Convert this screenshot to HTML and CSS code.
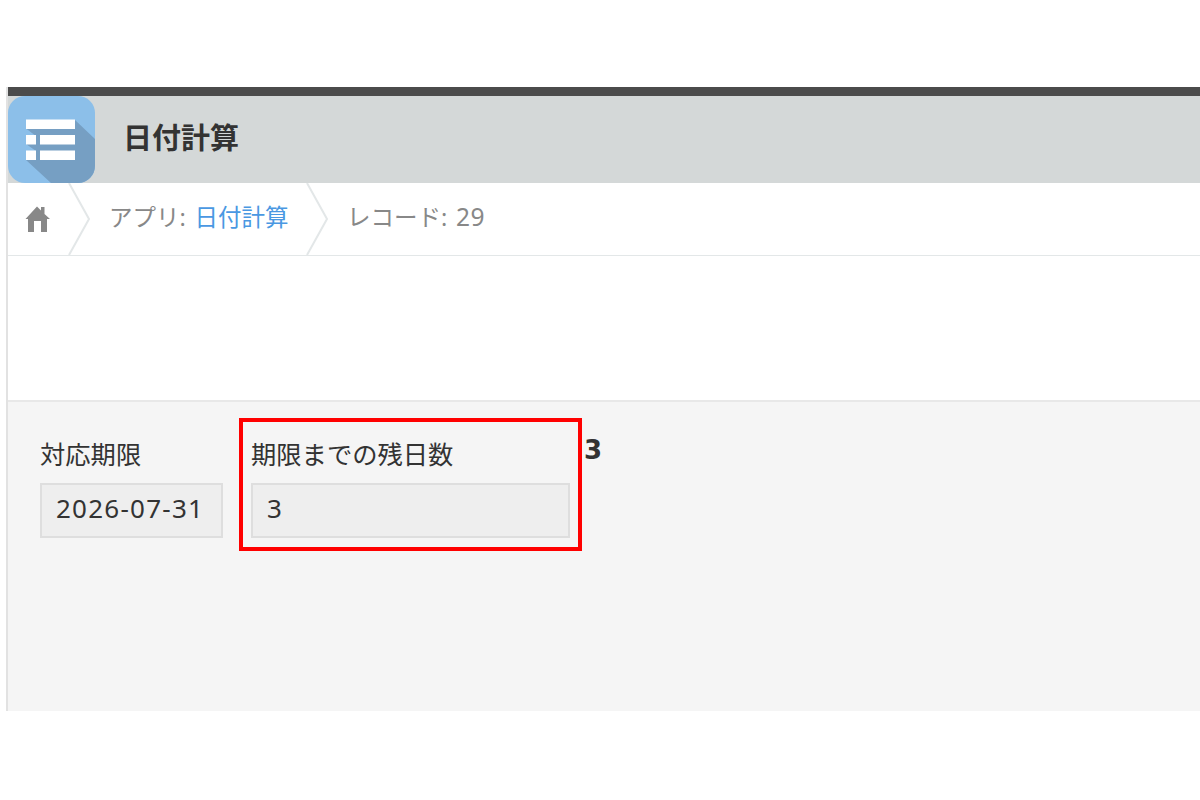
FILE: index.html
```html
<!DOCTYPE html>
<html lang="ja">
<head>
<meta charset="utf-8">
<title>日付計算</title>
<link rel="stylesheet" href="styles.css">
</head>
<body>
<div class="app">
  <div class="topbar"></div>
  <header class="header">
    <svg class="app-icon" width="87" height="87" viewBox="0 0 87 87">
      <defs><clipPath id="tile"><rect width="87" height="87" rx="17"/></clipPath></defs>
      <g clip-path="url(#tile)">
        <rect width="87" height="87" fill="#8cbfe9"/>
        <path d="M67 24L87 43V87H43L18 64H28V55L18 48H28V40L18 32.500Z" fill="#769fc3"/>
        <path d="M18 23.500H67V33H18ZM18 39H28V48.500H18ZM32 39H67V48.500H32ZM18 54.500H28V64H18ZM32 54.500H67V64H32Z" fill="#fff"/>
      </g>
    </svg>
    <h1 class="title">日付計算</h1>
  </header>
  <nav class="crumbs">
    <svg class="home" width="26" height="28" viewBox="0 0 26 28"><path d="M0.500 14L12 1.500L16 5.500V2H19.500V9L25 14H22V27H16V16H9V27H3V14Z" fill="#888"/></svg>
    <svg class="chevron" width="23" height="72" viewBox="0 0 23 72"><path d="M1 0L21 36L1 72" fill="none" stroke="#e3e7e8" stroke-width="2"/></svg>
    <span class="crumb crumb-app">アプリ: <a class="link">日付計算</a></span>
    <svg class="chevron" width="23" height="72" viewBox="0 0 23 72"><path d="M1 0L21 36L1 72" fill="none" stroke="#e3e7e8" stroke-width="2"/></svg>
    <span class="crumb crumb-record">レコード: <span class="number">29</span></span>
  </nav>
  <div class="toolbar"></div>
  <main class="record">
    <section class="field deadline">
      <div class="label">対応期限</div>
      <div class="value">2026-07-31</div>
    </section>
    <section class="field remaining">
      <div class="label">期限までの残日数</div>
      <div class="value">3</div>
    </section>
    <strong class="count">3</strong>
  </main>
</div>
</body>
</html>
```
FILE: styles.css
```css
* { box-sizing: border-box; }
body {
  margin: 0;
  padding-top: 87px;
  height: 800px;
  overflow: hidden;
  background: #fff;
  color: #333;
  font-family: "Noto Sans", "Noto Sans CJK JP", sans-serif;
  white-space: nowrap;
}
.app {
  margin-left: 6px;
  height: 624px;
  border-left: 2px solid #e2e2e2;
  display: flex;
  flex-direction: column;
}
.topbar { height: 9px; background: #4b4b4b; }
.header {
  height: 87px;
  background: #d4d8d8;
  display: flex;
}
.app-icon { display: block; }
.title {
  margin: 0 0 0 28px;
  font-size: 29px;
  line-height: 84px;
  font-weight: 700;
}
.crumbs {
  height: 73px;
  border-bottom: 1px solid #e3e7e8;
  display: flex;
  align-items: flex-start;
  color: #888;
}
.home { margin: 22px 0 0 17px; width: 26px; }
.home + .chevron { margin-left: 17px; }
.chevron { flex: none; }
.crumb { font-size: 23.500px; line-height: 68px; height: 68px; word-spacing: 2.500px; }
.crumb-app { width: 196px; margin-left: 18px; }
.crumb-app + .chevron { margin-left: 1px; }
.crumb-record { margin-left: 18px; }
.number { font-size: 24.500px; letter-spacing: .5px; }
.link { color: #4a98e2; }
.toolbar { height: 144px; }
.record {
  flex: 1;
  background: #f5f5f5;
  border-top: 2px solid #e8e8e8;
  padding: 16px 0 0 32px;
  display: flex;
  align-items: flex-start;
}
.label { font-size: 25.300px; line-height: 36px; height: 47px; }
.value {
  height: 55px;
  border: 2px solid #dedede;
  background: #eee;
  padding-left: 14px;
  font-size: 26px;
  line-height: 47px;
  letter-spacing: 1.250px;
}
.deadline { width: 183px; margin-top: 18px; }
.remaining {
  width: 343px;
  height: 133px;
  margin-left: 16px;
  border: 4px solid #f00;
  padding: 14px 8px 0;
}
.count {
  margin-left: 2px;
  font-family: "DejaVu Sans", sans-serif;
  font-size: 26px;
  line-height: 64px;
}
```
